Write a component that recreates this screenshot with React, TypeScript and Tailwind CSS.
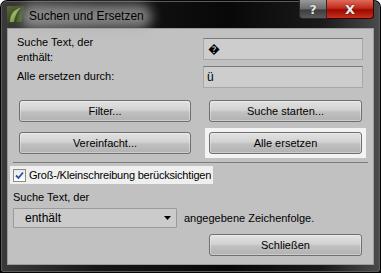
import React from "react";

function Btn({ label, className = "" }: { label: string; className?: string }) {
  return (
    <div
      className={
        "h-[22px] flex items-center justify-center rounded-[3px] border border-[#6f6f6f] bg-[linear-gradient(180deg,#e2e2e2_0%,#d2d2d2_45%,#c0c0c0_55%,#b2b2b2_100%)] shadow-[inset_0_0_0_1px_rgba(255,255,255,0.35)] text-black whitespace-nowrap " +
        className
      }
    >
      {label}
    </div>
  );
}

export default function App() {
  return (
    <div className="w-[381px] h-[273px] bg-[#050505] rounded-t-[7px] p-px font-['Liberation_Sans',Arial,sans-serif] text-[11px] text-black">
      <div className="h-full flex flex-col rounded-t-[6px] rounded-b-[2px] border border-[#5a5a5a] bg-[linear-gradient(90deg,#3a3a3a_0%,#161616_25%,#080808_60%,#1a1a1a_85%,#4a4a4a_100%)]">
        {/* Title bar */}
        <div className="h-[26px] flex items-start">
          <div className="ml-[5px] mt-[4px] w-[17px] h-[17px]">
            <svg width="17" height="17" viewBox="0 0 17 17">
              <defs>
                <linearGradient id="ig" x1="0" y1="0" x2="1" y2="1">
                  <stop offset="0" stopColor="#5a6b3a" />
                  <stop offset="1" stopColor="#1f2a12" />
                </linearGradient>
                <linearGradient id="lf" x1="0" y1="0" x2="1" y2="1">
                  <stop offset="0" stopColor="#c8d98a" />
                  <stop offset="1" stopColor="#4f7a24" />
                </linearGradient>
              </defs>
              <rect x="0" y="0" width="17" height="17" rx="1" fill="url(#ig)" />
              <path d="M3 16 C3 9 7 3 14 2 C10 5 8 10 7 16 Z" fill="url(#lf)" />
              <path d="M9 16 C10 11 12 7 15 5 L15 16 Z" fill="#3f5a1c" />
            </svg>
          </div>
          <div className="relative ml-[5px] mt-[6px]">
            <div className="absolute -inset-x-[8px] -inset-y-[4px] rounded-full bg-[#b0b0b0]/70 blur-[6px]" />
            <span className="relative text-[12px] leading-[14px] text-black whitespace-nowrap">Suchen und Ersetzen</span>
          </div>
          <div className="ml-auto mr-[5px] -mt-[2px] flex">
            <div className="w-[28px] h-[19px] flex items-center justify-center rounded-bl-[4px] border border-t-0 border-[#2a2a2a] bg-[linear-gradient(180deg,#9a9a9a_0%,#6a6a6a_50%,#3c3c3c_55%,#5a5a5a_100%)]">
              <span className="text-[#e8e8e8] font-bold text-[13px] leading-none font-['DejaVu_Sans',sans-serif] [text-shadow:0_0_1px_#000]">?</span>
            </div>
            <div className="w-[47px] h-[19px] flex items-center justify-center rounded-br-[4px] border border-t-0 border-l-0 border-[#3a0000] bg-[linear-gradient(180deg,#e06a5a_0%,#c02a1a_45%,#9a0a00_55%,#c8301e_100%)]">
              <span className="text-[#eeeeee] font-bold text-[13px] leading-none font-['DejaVu_Sans',sans-serif] [text-shadow:0_0_1px_#000]">X</span>
            </div>
          </div>
        </div>

        {/* Client area */}
        <div className="mx-[5px] mb-[6px] flex-1 border border-[#9c9c9c] bg-[#c1c1c1] flex flex-col">
          {/* Section 1 */}
          <div className="flex pl-[9px]">
            <div className="w-[186px] mt-[6px] leading-[15px]">
              <div>Suche Text, der</div>
              <div>enthält:</div>
              <div className="mt-[4px]">Alle ersetzen durch:</div>
            </div>
            <div className="w-[160px] mt-[9px] flex flex-col gap-[6px]">
              <div className="h-[22px] flex items-center pl-[4px] border border-[#a8a8a8] border-t-[#7a7a7a] bg-[#cdcdcd] text-[12px]">
                �
              </div>
              <div className="h-[22px] flex items-center pl-[3px] border border-[#a8a8a8] border-t-[#7a7a7a] bg-[#cdcdcd] text-[12px]">
                ü
              </div>
            </div>
          </div>

          {/* Buttons */}
          <div className="mt-[12px] ml-[11px] grid grid-cols-[172px_153px] gap-x-[18px] gap-y-[10px]">
            <Btn label="Filter..." />
            <Btn
              label="Suche starten..."
              className="border-[#3a78aa] shadow-[inset_0_0_0_1px_#8fc4ea] bg-[linear-gradient(180deg,#e0e4e8_0%,#d0d4d8_45%,#bcc0c4_55%,#b0b4b8_100%)]"
            />
            <Btn label="Vereinfacht..." />
            <div className="-m-[4px] p-[4px] bg-[#f3f3f3]">
              <Btn label="Alle ersetzen" />
            </div>
          </div>

          {/* Separator */}
          <div className="mt-[8px] mx-[5px] h-px bg-[#7c7c7c]" />

          {/* Checkbox row */}
          <div className="mt-[3px] ml-[2px] w-[203px] h-[18px] bg-[#efefef] flex items-center whitespace-nowrap">
            <div className="shrink-0 ml-[3px] w-[13px] h-[13px] border border-[#8a8a8a] bg-[linear-gradient(180deg,#e8e8e8,#ffffff)] flex items-center justify-center">
              <svg width="9" height="9" viewBox="0 0 9 9">
                <path d="M1 4.5 L3.5 7 L8 1.5" stroke="#2b4f9e" strokeWidth="1.8" fill="none" />
              </svg>
            </div>
            <span className="ml-[3px] leading-[14px] tracking-[-0.2px]">Groß-/Kleinschreibung berücksichtigen</span>
          </div>

          <div className="mt-[6px] ml-[5px] leading-[15px]">Suche Text, der</div>

          <div className="mt-[3px] ml-[5px] flex items-center">
            <div className="w-[164px] h-[20px] flex items-center border border-[#9a9a9a] bg-[#cbcbcb] rounded-[1px]">
              <span className="ml-[11px] text-[12px]">enthält</span>
              <svg className="ml-auto mr-[5px]" width="7" height="4" viewBox="0 0 7 4">
                <path d="M0 0 L7 0 L3.5 4 Z" fill="#000" />
              </svg>
            </div>
            <span className="ml-[7px] whitespace-nowrap">angegebene Zeichenfolge.</span>
          </div>

          <div className="mt-[6px] ml-[201px] w-[153px]">
            <Btn label="Schließen" />
          </div>
        </div>
      </div>
    </div>
  );
}
